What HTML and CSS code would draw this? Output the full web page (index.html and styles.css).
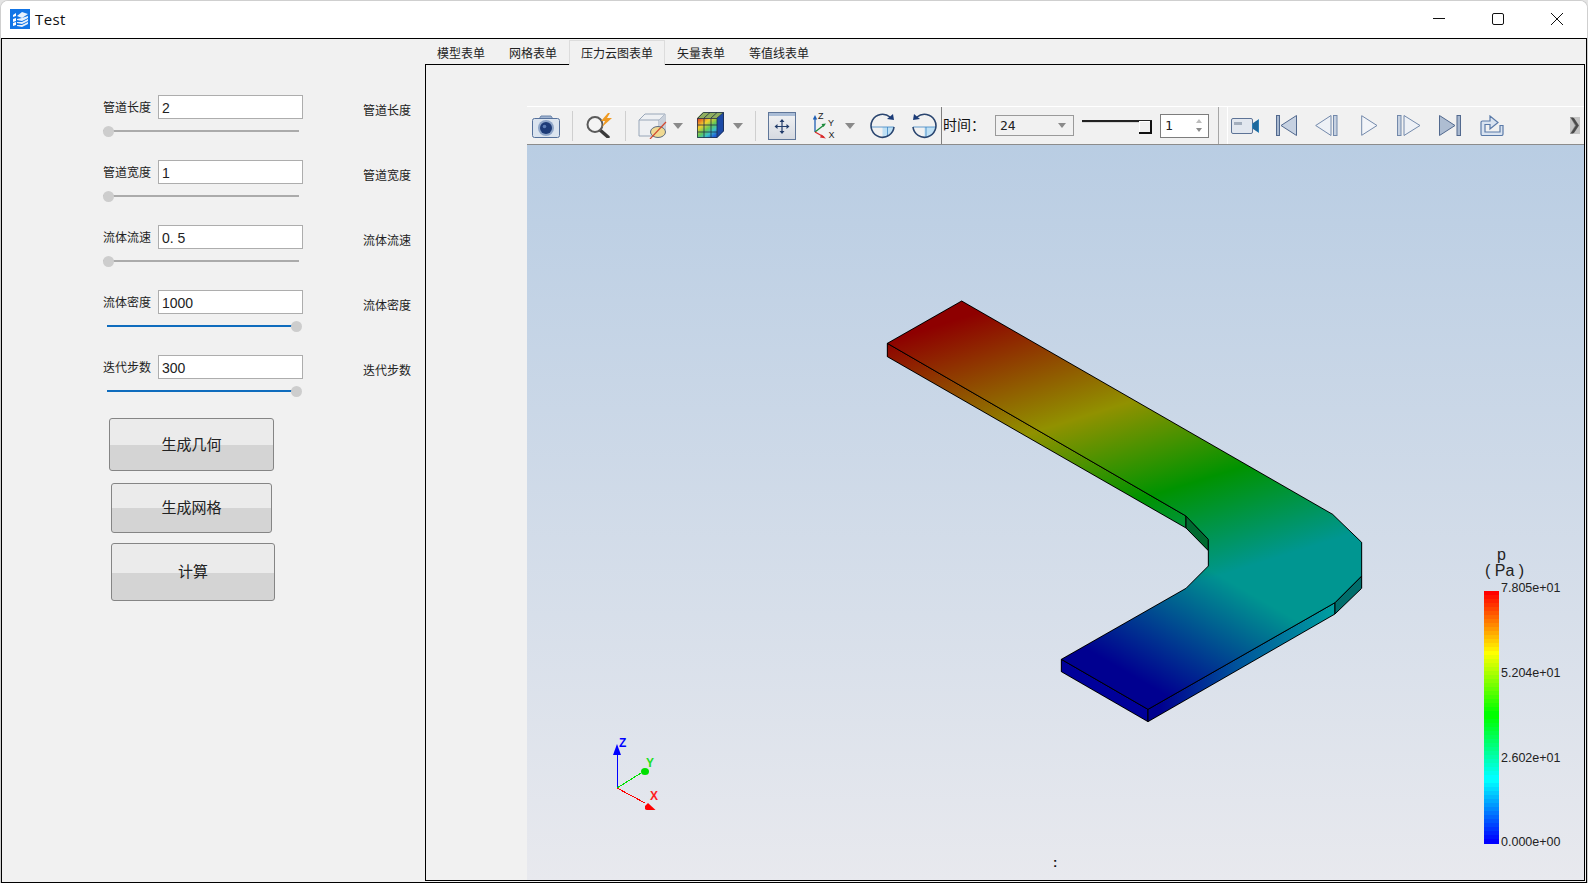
FILE: index.html
```html
<!DOCTYPE html>
<html lang="zh">
<head>
<meta charset="utf-8">
<title>Test</title>
<link rel="stylesheet" href="styles.css">
</head>
<body>
<div class="window">
  <header class="titlebar">
    <svg class="app-icon" viewBox="0 0 20 20"><rect width="20" height="20" fill="#1275e6"/><path d="M3 6l3-2v3l-3 1zM3 10l3-1v3l-3 1zM3 14l3-1v3l-3 1z" fill="#fff"/><path d="M7 7l5-4 6 2-6 4zM7 10l5-1 6-2v2l-6 3-5-1zM7 13l5 0 6-3v2l-6 3-5-1zM7 16l5 0 6-3v2l-6 3-5-1z" fill="#fff" fill-opacity=".9"/></svg>
    <span class="app-title">Test</span>
    <span class="title-spacer"></span>
    <svg class="winbtn" viewBox="0 0 12 12"><path d="M0 5.500h12" stroke="#111" stroke-width="1" fill="none"/></svg>
    <svg class="winbtn winbtn-next" viewBox="0 0 12 12"><rect x=".5" y=".5" width="11" height="11" rx="1.5" stroke="#111" fill="none"/></svg>
    <svg class="winbtn winbtn-next winbtn-last" viewBox="0 0 12 12"><path d="M0 0l12 12M12 0L0 12" stroke="#111" stroke-width="1" fill="none"/></svg>
  </header>
  <main class="content">
    <section class="form-panel">
      <div class="group">
        <div class="row"><label class="lbl">管道长度</label><input class="field" value="2"><span class="lbl lbl-right">管道长度</span></div>
        <div class="slider"><span class="track"></span><span class="knob"></span></div>
      </div>
      <div class="group">
        <div class="row"><label class="lbl">管道宽度</label><input class="field" value="1"><span class="lbl lbl-right">管道宽度</span></div>
        <div class="slider"><span class="track"></span><span class="knob"></span></div>
      </div>
      <div class="group">
        <div class="row"><label class="lbl">流体流速</label><input class="field" value="0. 5"><span class="lbl lbl-right">流体流速</span></div>
        <div class="slider"><span class="track"></span><span class="knob"></span></div>
      </div>
      <div class="group">
        <div class="row"><label class="lbl">流体密度</label><input class="field" value="1000"><span class="lbl lbl-right">流体密度</span></div>
        <div class="slider slider-full"><span class="track"></span><span class="knob"></span></div>
      </div>
      <div class="group">
        <div class="row"><label class="lbl">迭代步数</label><input class="field" value="300"><span class="lbl lbl-right">迭代步数</span></div>
        <div class="slider slider-full"><span class="track"></span><span class="knob"></span></div>
      </div>
      <button class="btn btn-geo">生成几何</button>
      <button class="btn btn-mesh">生成网格</button>
      <button class="btn btn-calc">计算</button>
    </section>
    <section class="tab-area">
      <nav class="tabs">
        <span class="tab">模型表单</span>
        <span class="tab">网格表单</span>
        <span class="tab tab-active">压力云图表单</span>
        <span class="tab">矢量表单</span>
        <span class="tab">等值线表单</span>
      </nav>
      <div class="pane">
        <div class="viewer">
          <div class="toolbar">
            <svg class="ti" style="--w:28px;--m:5px" viewBox="0 0 28 24"><path d="M7 5l2-3h10l2 3z" fill="#9fb3d0" stroke="#6a84aa"/><rect x=".5" y="4.5" width="27" height="19" rx="2" fill="#dbe4ef" stroke="#56719b"/><circle cx="14" cy="14" r="8" fill="#8ea5c8"/><circle cx="14" cy="14" r="6" fill="#1d3b78"/><circle cx="12.5" cy="12.5" r="1.8" fill="#5d7db5"/></svg>
            <span class="sep" style="--m:12px"></span>
            <svg class="ti" style="--w:28px;--m:12px" viewBox="0 0 28 25"><path d="M15 17l8 7" stroke="#3a3a3a" stroke-width="3.4" stroke-linecap="round"/><circle cx="10" cy="11.500" r="7.500" fill="#f4f4f4" stroke="#5a5a5a" stroke-width="2"/><path d="M23 0l-7 8h4l-3 6 10-9h-5l3-5z" fill="#ef9a22"/></svg>
            <span class="sep" style="--m:12px"></span>
            <svg class="ti" style="--w:29px;--m:12px" viewBox="0 0 29 26"><path d="M1 7l6-6h20v16l-6 6H1z" fill="#eef0f3" stroke="#98a6b8"/><path d="M1 7h20v16M21 7l6-6" fill="none" stroke="#98a6b8"/><path d="M21 7l6-6v16l-6 6z" fill="#c9d0da"/><ellipse cx="20" cy="19" rx="7.500" ry="5.500" fill="#efd992" stroke="#5a6a80"/><path d="M12 26l16-17" stroke="#d2482e" stroke-width="1.200"/></svg>
            <span class="drop" style="--m:6px"></span>
            <svg class="ti" style="--w:27px;--m:14px" viewBox="0 0 27 27">
              <defs><linearGradient id="cubeg" x1="0" y1="0" x2=".75" y2="1"><stop offset="0" stop-color="#e0301e"/><stop offset=".35" stop-color="#f2d02e"/><stop offset=".6" stop-color="#62c85a"/><stop offset=".8" stop-color="#3ac0c8"/><stop offset="1" stop-color="#2060d8"/></linearGradient></defs>
              <path d="M0 6l6-6h21l-7 6z" fill="#8fae5e"/><path d="M20 6l7-6v19l-7 7z" fill="#1c4aa6"/>
              <rect y="6" width="20" height="20" fill="url(#cubeg)"/>
              <path d="M.5 6.500h19.500v19H.5zM7 6.500v19M14 6.500v19M.5 13h19.500M.5 20h19.500M20 6l6.500-5.500M6.500 .5h20v18.500L20 25.500M.5 6.500L6.500 .5M7 6l6-5.500M14 6l6-5.500" fill="none" stroke="#1f2d4a" stroke-width=".8"/>
            </svg>
            <span class="drop" style="--m:9px"></span>
            <span class="sep" style="--m:12px"></span>
            <svg class="ti" style="--w:28px;--m:12px" viewBox="0 0 28 28"><defs><linearGradient id="fitbg" x1="0" y1="0" x2="0" y2="1"><stop offset="0" stop-color="#f2f3f5"/><stop offset="1" stop-color="#d5d9e0"/></linearGradient></defs><rect x=".5" y=".5" width="27" height="27" fill="url(#fitbg)" stroke="#5f7699"/><rect x="1" y="1" width="26" height="3" fill="#a9bcd6"/><path d="M14 9v11M8.500 14.500h11" stroke="#223c6a" stroke-width="1.200"/><path d="M14 7l-2.500 3h5zM14 22l-2.500-3h5zM6.500 14.500l3-2.500v5zM21.500 14.500l-3-2.500v5z" fill="#223c6a"/></svg>
            <svg class="ti" style="--w:22px;--m:17px" viewBox="0 0 22 27"><path d="M2 20V6" stroke="#1f5fb4" stroke-width="1.300"/><path d="M2 3l-2.200 4.500h4.400z" fill="#1f5fb4"/><path d="M2 20l9-7" stroke="#1b8a3a" stroke-width="1.300"/><path d="M13 11.500l-4.500 .5 2 3z" fill="#1b8a3a"/><path d="M2 20l9 5" stroke="#d92a2a" stroke-width="1.300"/><path d="M13 26.500l-4.500-4-1.500 3z" fill="#d92a2a"/><text x="5" y="6.500" class="ax">Z</text><text x="15" y="14" class="ax">Y</text><text x="15.500" y="26" class="ax">X</text></svg>
            <span class="drop" style="--m:10px"></span>
            <svg class="ti" style="--w:25px;--m:15px" viewBox="0 0 25 26"><path d="M12.500 14V25A11.500 11.500 0 0 0 24 14z" fill="#bfe0f4"/><path d="M1 14h23M17.500 14v10" stroke="#3e86c4" stroke-width=".8"/><path d="M20 4A11.500 11.500 0 1 0 24 14" fill="none" stroke="#2a456f" stroke-width="1.600"/><path d="M24 7l-1-6-6 5z" fill="#1c3c78"/></svg>
            <svg class="ti" style="--w:25px;--m:17px" viewBox="0 0 25 26"><path d="M12.500 14V25A11.500 11.500 0 0 0 24 14z" fill="#bfe0f4"/><path d="M1 14h23M14 14v10" stroke="#3e86c4" stroke-width=".8"/><path d="M5 4A11.500 11.500 0 1 1 1 14" fill="none" stroke="#2a456f" stroke-width="1.600"/><path d="M1 7l1-6 6 5z" fill="#1c3c78"/></svg>
            <span class="vline" style="--m:4px"></span>
            <span class="time-label">时间：</span>
            <div class="combo"><span>24</span><i class="drop drop-small"></i></div>
            <div class="mini-slider"><i class="mini-handle"></i></div>
            <div class="spin"><span>1</span><i class="spin-arrows"></i></div>
            <span class="vline vline-light" style="--m:9px"></span>
            <div class="media">
              <svg class="ti" style="--w:29px;--m:3px" viewBox="0 0 29 16"><rect x=".5" y=".5" width="21" height="15" rx="1.500" fill="#e2e7ef" stroke="#5d7396"/><rect x="3" y="4" width="8" height="3" fill="#a3aebd"/><path d="M21 6l7-5v14l-7-5z" fill="#2a7fb8"/><path d="M22 5l5-3v12l-5-3z" fill="#0d4f80" fill-opacity=".5"/></svg>
              <svg class="ti" style="--w:21px;--m:16px" viewBox="0 0 21 21"><rect x=".5" y=".5" width="3" height="20" fill="#a8b8cf" stroke="#52698e"/><path d="M5 10.500L20.500 .5v20z" fill="#c6d1e1" stroke="#52698e"/></svg>
              <svg class="ti" style="--w:23px;--m:18px" viewBox="0 0 23 21"><path d="M.7 10.500L16 .5v20z" fill="#eef1f6" stroke="#7389ab"/><rect x="18.500" y=".5" width="3.500" height="20" fill="#c6d1e1" stroke="#7389ab"/></svg>
              <svg class="ti" style="--w:17px;--m:23px" viewBox="0 0 17 21"><path d="M.7 .7L16 10.500 .7 20.300z" fill="#f2f4f8" stroke="#7389ab"/></svg>
              <svg class="ti" style="--w:24px;--m:19px" viewBox="0 0 24 21"><rect x=".5" y=".5" width="3.500" height="20" fill="#c6d1e1" stroke="#7389ab"/><path d="M7 .5L23 10.500 7 20.500z" fill="#eef1f6" stroke="#7389ab"/></svg>
              <svg class="ti" style="--w:22px;--m:18px" viewBox="0 0 22 21"><path d="M.5 .5L16 10.500 .5 20.500z" fill="#aebdd2" stroke="#52698e"/><rect x="18" y=".5" width="3.500" height="20" fill="#a8b8cf" stroke="#52698e"/></svg>
              <svg class="ti" style="--w:24px;--m:19px" viewBox="0 0 24 21"><path d="M1 7.500a1.500 1.500 0 0 1 1.500-1.500H10V1l8 6.500L10 14V9.500H5v7.500h15v-6.500h3V19a1.500 1.500 0 0 1-1.500 1.500H2.500A1.500 1.500 0 0 1 1 19z" fill="#d9e3f0" stroke="#5a7aa8" stroke-width="1.200"/></svg>
              <svg class="ti" style="--w:11px;--m:65px" viewBox="0 0 11 17"><rect x="1" width="10" height="17" fill="#c4c4c4"/><path d="M2 1l5 7.500-5 7.500h3l5-7.500L5 1z" fill="#555"/><path d="M1 0h3l5 8.500L4 17H1l5-8.500z" fill="#3e3e3e" fill-opacity=".45"/></svg>
            </div>
          </div>
          <div class="canvas">
            <svg class="scene" viewBox="527 145 1057 735" width="1057" height="735">
              <defs>
                <linearGradient id="leg1" gradientUnits="userSpaceOnUse" x1="60" y1="191" x2="351" y2="1116">
                  <stop offset="0" stop-color="#8e0000"/><stop offset=".404" stop-color="#919100"/><stop offset=".7" stop-color="#009300"/><stop offset="1" stop-color="#009691"/>
                </linearGradient>
                <linearGradient id="leg2" gradientUnits="userSpaceOnUse" x1="-310" y1="537" x2="-114.500" y2="198">
                  <stop offset="0" stop-color="#000090"/><stop offset="1" stop-color="#000090" stop-opacity="0"/>
                </linearGradient>
                <linearGradient id="side2" gradientUnits="userSpaceOnUse" x1="900" y1="0" x2="1425" y2="0">
                  <stop offset="0" stop-color="#00008f"/><stop offset=".45" stop-color="#00559c"/><stop offset="1" stop-color="#00a0a0"/>
                </linearGradient>
              </defs>
              <g transform="translate(860 280) scale(.33333)" shape-rendering="crispEdges" stroke="#000" stroke-width="3" stroke-linejoin="round">
                <polygon points="82,190 978,708 978,744 82,230" fill="url(#leg1)"/>
                <polygon points="978,708 1045,778 1045,812 978,744" fill="#006a30"/>
                <polygon points="604,1138 604,1175 864,1325 864,1288" fill="#00009a"/>
                <polygon points="864,1288 864,1325 1425,1002 1425,968" fill="url(#side2)"/>
                <polygon points="1425,968 1505,888 1505,925 1425,1002" fill="#006e6c"/>
                <polygon points="305,63 1418,703 1505,787 1505,888 1425,968 864,1288 604,1138 978,925 1045,858 1045,778 978,708 82,190" fill="url(#leg1)" stroke="none"/>
                <polygon points="305,63 1418,703 1505,787 1505,888 1425,968 864,1288 604,1138 978,925 1045,858 1045,778 978,708 82,190" fill="url(#leg2)"/>
              </g>
              <g class="axes">
                <path d="M617 788V752" stroke="#0000ff" fill="none" shape-rendering="crispEdges"/>
                <path d="M617 744l-4 11h8z" fill="#0000ff"/>
                <path d="M617 788l24-15" stroke="#00e000" fill="none" shape-rendering="crispEdges"/>
                <ellipse cx="645" cy="771.500" rx="4" ry="3.500" fill="#00e000"/>
                <path d="M617 788l28 15" stroke="#ff0000" fill="none" shape-rendering="crispEdges"/>
                <path d="M655.500 810h-8.500a3 3 0 0 1-2-1v-3l3-3z" fill="#ff0000"/>
                <text x="619" y="747" class="axl axl-z">Z</text>
                <text x="646" y="767" class="axl axl-y">Y</text>
                <text x="650" y="800" class="axl axl-x">X</text>
              </g>
            </svg>
            <div class="legend">
              <span class="leg-name">p</span>
              <span class="leg-unit">( Pa )</span>
              <div class="leg-bar"></div>
              <span class="leg-val leg-v1">7.805e+01</span>
              <span class="leg-val leg-v2">5.204e+01</span>
              <span class="leg-val leg-v3">2.602e+01</span>
              <span class="leg-val leg-v4">0.000e+00</span>
            </div>
            <span class="status-colon">:</span>
          </div>
        </div>
      </div>
    </section>
  </main>
</div>
</body>
</html>
```

FILE: styles.css
```css
* { box-sizing: border-box; }
html, body { margin: 0; padding: 0; background: #e4e4e4; }
body { width: 1588px; height: 883px; overflow: hidden; font-family: "Noto Sans CJK SC", "Liberation Sans", sans-serif; color: #222; }

.window { width: 1588px; height: 883px; display: flex; flex-direction: column; background: #fff; border: 1px solid #cfcfcf; border-bottom: 0; border-radius: 8px 8px 0 0; overflow: hidden; }

.titlebar { height: 37px; flex: none; display: flex; align-items: center; background: #fff; padding-bottom: 1px; }
.app-icon { width: 20px; height: 20px; margin-left: 9px; flex: none; }
.app-title { margin-left: 5px; font: 15px "Open Sans", "Liberation Sans", sans-serif; color: #111; letter-spacing: .4px; }
.title-spacer { flex: 1; }
.winbtn { width: 12px; height: 12px; flex: none; }
.winbtn-next { margin-left: 47px; }
.winbtn-last { margin-right: 24px; }

.content { flex: 1; min-height: 0; display: flex; background: #f1f1f1; border: 1px solid #000; margin: 0; padding-right: 1px; padding-bottom: 1px; }

.form-panel { width: 423px; flex: none; padding: 56px 0 0 101px; display: flex; flex-direction: column; align-items: flex-start; }
.group { width: 310px; margin-bottom: 23px; height: 42px; flex: none; }
.group:nth-of-type(5) { margin-bottom: 21px; }
.row { display: flex; align-items: center; height: 24px; }
.lbl { width: 55px; flex: none; font-size: 12px; line-height: 16px; color: #222; }
.lbl-right { width: 48px; margin-left: 60px; padding-top: 6px; line-height: 16px; height: 22px; white-space: nowrap; }
.field { width: 145px; height: 24px; flex: none; border: 1px solid #adadad; background: #fff; padding: 1px 3px 0; margin: 0; font: 14px "Liberation Sans", sans-serif; color: #222; outline: 0; border-radius: 0; }

.slider { position: relative; width: 200px; height: 11px; margin-top: 7px; }
.track { position: absolute; left: 0; top: 4px; width: 196px; height: 2px; background: #ababab; }
.knob { position: absolute; left: 0; top: 0; width: 11px; height: 11px; border-radius: 50%; background: #cdcdcd; }
.slider-full .track { left: 4px; width: 188px; background: #0f6cbd; }
.slider-full .knob { left: 188px; }

.btn { display: block; flex: none; border: 1px solid #858585; border-radius: 3px; background: linear-gradient(#ebebeb 51%, #d4d4d4 51%); font: 15px "Noto Sans CJK SC", sans-serif; color: #222; padding: 0 0 3px; margin: 0; }
.btn-geo { width: 165px; height: 53px; margin-left: 6px; }
.btn-mesh { width: 161px; height: 50px; margin: 12px 0 0 8px; }
.btn-calc { width: 164px; height: 58px; margin: 10px 0 0 8px; }

.tab-area { flex: 1; min-width: 0; display: flex; flex-direction: column; }
.tabs { height: 25px; flex: none; display: flex; align-items: stretch; padding-top: 1px; position: relative; z-index: 1; }
.tab { padding: 1px 12px 0; font-size: 12px; line-height: 24px; color: #222; white-space: nowrap; height: 24px; }
.tab-active { background: #f1f1f1; border: 1px solid #dcdcdc; border-bottom: 0; padding: 0 11px; height: 25px; line-height: 24px; }

.pane { flex: 1; min-height: 0; border: 1px solid #000; background: #f1f1f1; padding: 41px 0 0 101px; display: flex; }
.viewer { flex: 1; min-width: 0; display: flex; flex-direction: column; }

.toolbar { height: 39px; flex: none; display: flex; align-items: center; background: #f1f1f1; border-top: 1px solid #fff; border-bottom: 1px solid #8c8c8c; }
.ti { flex: none; display: block; width: var(--w); margin-left: var(--m); height: auto; }
.sep { flex: none; width: 1px; height: 30px; background: #cfcfcf; margin-left: var(--m); }
.vline { flex: none; width: 1px; align-self: stretch; background: #7f7f7f; margin-left: var(--m); }
.vline-light { background: #a6a6a6; }
.drop { flex: none; width: 10px; height: 0; border-left: 5px solid transparent; border-right: 5px solid transparent; border-top: 6px solid #8a8a8a; margin-left: var(--m); }
.ax { font: 9px "Liberation Sans", sans-serif; fill: #222; }
.time-label { flex: none; width: 39px; margin: -3px 0 0 1px; font-size: 14px; color: #111; line-height: 18px; white-space: nowrap; }

.combo { flex: none; width: 79px; height: 21px; margin-left: 13px; border: 1px solid #9a9a9a; background: #f1f1f1; display: flex; align-items: center; justify-content: space-between; padding: 0 7px 0 4px; font: 13px "DejaVu Sans Mono", "Liberation Mono", monospace; color: #222; }
.drop-small { width: 8px; margin: 0; border-left-width: 4px; border-right-width: 4px; border-top-width: 5px; }

.mini-slider { flex: none; position: relative; width: 70px; height: 3px; margin: -8px 0 0 8px; border-top: 2px solid #222; border-bottom: 1px solid #d6d6d6; }
.mini-handle { position: absolute; right: 0; top: -1px; width: 13px; height: 13px; background: #efefef; border-right: 2px solid #111; border-bottom: 2px solid #111; box-shadow: inset 1px 1px 0 #fff; }

.spin { flex: none; width: 49px; height: 24px; margin-left: 8px; background: #fff; border: 1px solid #7d7d7d; display: flex; align-items: center; justify-content: space-between; padding: 0 6px 0 4px; font: 13px "DejaVu Sans Mono", "Liberation Mono", monospace; color: #222; }
.spin-arrows { display: flex; flex-direction: column; gap: 5px; }
.spin-arrows::before, .spin-arrows::after { content: ""; width: 0; height: 0; border-left: 3.5px solid transparent; border-right: 3.5px solid transparent; }
.spin-arrows::before { border-bottom: 4px solid #bdbdbd; }
.spin-arrows::after { border-top: 4px solid #8a8a8a; }

.media { flex: none; display: flex; align-items: center; align-self: stretch; margin-left: 8px; border-left: 1px solid #fff; }

.canvas { flex: 1; min-height: 0; position: relative; background: linear-gradient(#b9cde3, #e8e9ee); overflow: hidden; }
.scene { position: absolute; left: 0; top: 0; display: block; }
.axl { font: bold 12px "Liberation Sans", sans-serif; }
.axl-z { fill: #0000ff; }
.axl-y { fill: #22e022; }
.axl-x { fill: #ff2020; }

.legend { position: absolute; left: 957px; top: 400px; width: 100px; height: 320px; font-family: "Liberation Sans", sans-serif; color: #222; }
.leg-bar { position: absolute; left: 0; top: 46px; width: 15px; height: 253px; background: linear-gradient(
  #f00 4px,#f10 0 8px,#f20 0 12px,#f30 0 16px,#f40 0 20px,#f50 0 24px,#f60 0 28px,#f70 0 32px,#f80 0 36px,#f90 0 40px,#fa0 0 44px,#fb0 0 48px,#fc0 0 52px,#fd0 0 56px,#fe0 0 60px,#ff0 0 64px,
  #ef0 0 68px,#df0 0 72px,#cf0 0 76px,#bf0 0 80px,#af0 0 84px,#9f0 0 88px,#8f0 0 92px,#7f0 0 96px,#6f0 0 100px,#5f0 0 104px,#4f0 0 108px,#3f0 0 112px,#2f0 0 116px,#1f0 0 120px,#0f0 0 128px,
  #0f1 0 132px,#0f2 0 136px,#0f3 0 140px,#0f4 0 144px,#0f5 0 148px,#0f6 0 152px,#0f7 0 156px,#0f8 0 160px,#0f9 0 164px,#0fa 0 168px,#0fb 0 172px,#0fc 0 176px,#0fd 0 180px,#0fe 0 184px,#0ff 0 192px,
  #0ef 0 196px,#0df 0 200px,#0cf 0 204px,#0bf 0 208px,#0af 0 212px,#09f 0 216px,#08f 0 220px,#07f 0 224px,#06f 0 228px,#05f 0 232px,#04f 0 236px,#03f 0 240px,#02f 0 244px,#01f 0 248px,#00f 0 253px); }
.leg-name, .leg-unit { position: absolute; font-size: 16px; line-height: 16px; white-space: nowrap; }
.leg-name { left: 13px; top: 2px; }
.leg-unit { left: 1px; top: 18px; }
.leg-val { position: absolute; left: 17px; font-size: 12.5px; line-height: 14px; white-space: nowrap; }
.leg-v1 { top: 36px; }
.leg-v2 { top: 121px; }
.leg-v3 { top: 206px; }
.leg-v4 { top: 290px; }

.status-colon { position: absolute; left: 526px; top: 710px; font: bold 13px "Liberation Sans", sans-serif; color: #111; }
```
